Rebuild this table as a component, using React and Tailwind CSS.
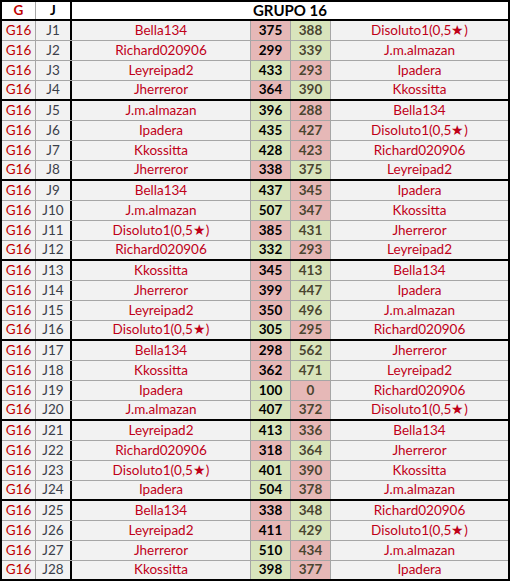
import React from "react";

const data = [
  ["Bella134", 375, 388, "Disoluto1(0,5★)"],
  ["Richard020906", 299, 339, "J.m.almazan"],
  ["Leyreipad2", 433, 293, "Ipadera"],
  ["Jherreror", 364, 390, "Kkossitta"],
  ["J.m.almazan", 396, 288, "Bella134"],
  ["Ipadera", 435, 427, "Disoluto1(0,5★)"],
  ["Kkossitta", 428, 423, "Richard020906"],
  ["Jherreror", 338, 375, "Leyreipad2"],
  ["Bella134", 437, 345, "Ipadera"],
  ["J.m.almazan", 507, 347, "Kkossitta"],
  ["Disoluto1(0,5★)", 385, 431, "Jherreror"],
  ["Richard020906", 332, 293, "Leyreipad2"],
  ["Kkossitta", 345, 413, "Bella134"],
  ["Jherreror", 399, 447, "Ipadera"],
  ["Leyreipad2", 350, 496, "J.m.almazan"],
  ["Disoluto1(0,5★)", 305, 295, "Richard020906"],
  ["Bella134", 298, 562, "Jherreror"],
  ["Kkossitta", 362, 471, "Leyreipad2"],
  ["Ipadera", 100, 0, "Richard020906"],
  ["J.m.almazan", 407, 372, "Disoluto1(0,5★)"],
  ["Leyreipad2", 413, 336, "Bella134"],
  ["Richard020906", 318, 364, "Jherreror"],
  ["Disoluto1(0,5★)", 401, 390, "Kkossitta"],
  ["Ipadera", 504, 378, "J.m.almazan"],
  ["Bella134", 338, 348, "Richard020906"],
  ["Leyreipad2", 411, 429, "Disoluto1(0,5★)"],
  ["Jherreror", 510, 434, "J.m.almazan"],
  ["Kkossitta", 398, 377, "Ipadera"],
];

const PINK = "bg-[#e6b8b7]";
const GREEN = "bg-[#d8e4bc]";

function Row({ r, i }) {
  const groupEnd = (i + 1) % 4 === 0;
  const [a, s1, s2, b] = r;
  const win1 = s1 > s2;
  return (
    <div
      className={
        "flex h-[20px] box-border " +
        (groupEnd ? "border-b-2 border-black" : "border-b border-[#a6a6a6]")
      }
    >
      <div className="w-[34px] shrink-0 border-r border-[#a6a6a6] bg-[#f2f2f2] flex items-center justify-center text-[#c00000]">
        G16
      </div>
      <div className="w-[36px] shrink-0 border-r-2 border-black bg-[#f2f2f2] flex items-center justify-center text-[#3b3f4a]">
        J{i + 1}
      </div>
      <div className="w-[179px] shrink-0 border-r border-[#a6a6a6] bg-[#f2f2f2] flex items-center justify-center text-[#c00018]">
        {a}
      </div>
      <div
        className={
          "w-[40px] shrink-0 border-r border-[#a6a6a6] flex items-center justify-center font-bold text-black " +
          (win1 ? GREEN : PINK)
        }
      >
        {s1}
      </div>
      <div
        className={
          "w-[40px] shrink-0 border-r border-[#a6a6a6] flex items-center justify-center font-bold text-[#4a4530] " +
          (win1 ? PINK : GREEN)
        }
      >
        {s2}
      </div>
      <div className="w-[177px] shrink-0 bg-[#f2f2f2] flex items-center justify-center text-[#c00018]">
        {b}
      </div>
    </div>
  );
}

export default function App() {
  return (
    <div
      className="w-[510px] border-2 border-b-0 border-black bg-white text-[13.5px] leading-none"
      style={{ fontFamily: "Lato, 'Liberation Sans', sans-serif" }}
    >
      <div className="flex h-[19px] box-border border-b-2 border-black bg-white font-bold">
        <div className="w-[34px] shrink-0 border-r border-[#a6a6a6] flex items-center justify-center text-[#c00000]">
          G
        </div>
        <div className="w-[36px] shrink-0 border-r-2 border-black flex items-center justify-center text-black">
          J
        </div>
        <div className="flex-1 flex items-center justify-center text-black text-[15px]">
          GRUPO 16
        </div>
      </div>
      {data.map((r, i) => (
        <Row key={i} r={r} i={i} />
      ))}
    </div>
  );
}
